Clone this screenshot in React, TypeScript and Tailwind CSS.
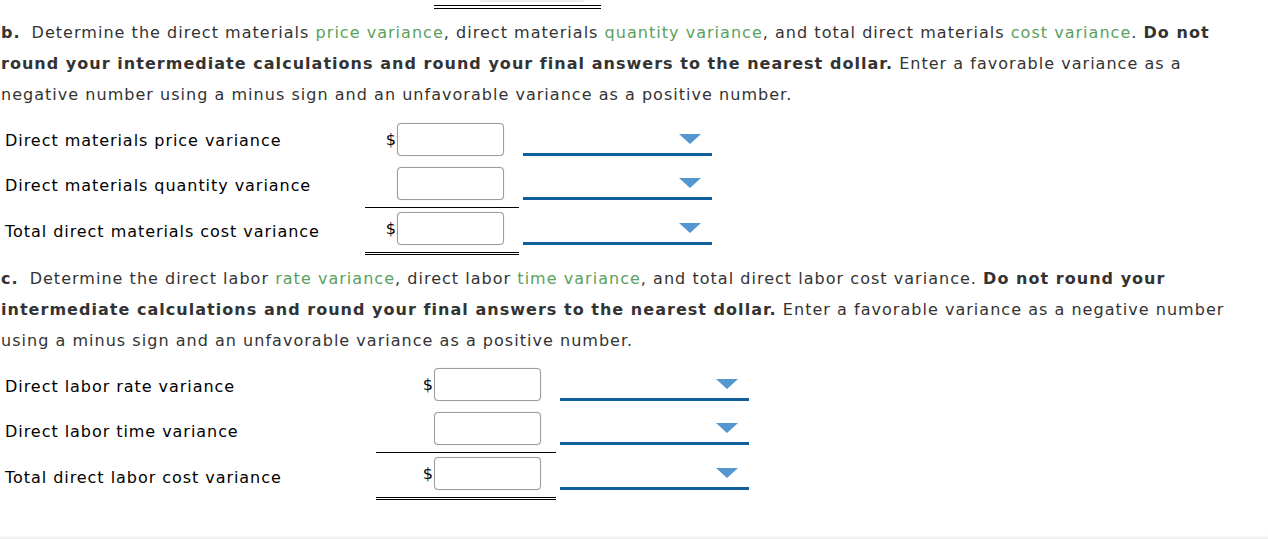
import type { ReactNode } from 'react';

const GREEN = 'text-[#5aa15d]';

interface Row {
  label: string;
  dollar: boolean;
  rule: 'none' | 'single' | 'double';
  labelPad: string;
  boxPad: string;
}

const MATERIAL_ROWS: Row[] = [
  { label: 'Direct materials price variance', dollar: true, rule: 'none', labelPad: 'pt-[21px]', boxPad: 'pt-[13px] pb-[6px]' },
  { label: 'Direct materials quantity variance', dollar: false, rule: 'single', labelPad: 'pt-[14px]', boxPad: 'pt-[5px] pb-[7px]' },
  { label: 'Total direct materials cost variance', dollar: true, rule: 'double', labelPad: 'pt-[14px]', boxPad: 'pt-[4px] pb-[7px]' },
];

const LABOR_ROWS: Row[] = [
  { label: 'Direct labor rate variance', dollar: true, rule: 'none', labelPad: 'pt-[21px]', boxPad: 'pt-[12px] pb-[6px]' },
  { label: 'Direct labor time variance', dollar: false, rule: 'single', labelPad: 'pt-[15px]', boxPad: 'pt-[5px] pb-[7px]' },
  { label: 'Total direct labor cost variance', dollar: true, rule: 'double', labelPad: 'pt-[15px]', boxPad: 'pt-[4px] pb-[7px]' },
];

function Caret() {
  return (
    <svg width="22" height="10" viewBox="0 0 22 10" className="absolute right-[11px] top-[11px]">
      <polygon points="0,0 22,0 11,10" fill="#5497d0" />
    </svg>
  );
}

function AnswerTable({ rows, labelWidth, amountWidth }: { rows: Row[]; labelWidth: string; amountWidth: string }) {
  return (
    <div className="flex flex-col">
      {rows.map((row) => {
        const ruleClass =
          row.rule === 'single'
            ? 'border-b border-black'
            : row.rule === 'double'
              ? 'border-b-[3px] border-double border-black'
              : '';
        return (
          <div key={row.label} className="flex items-start">
            <div
              className={`${labelWidth} shrink-0 pl-[5px] ${row.labelPad} text-[16px] leading-[20px] tracking-[0.95px] text-black whitespace-nowrap`}
            >
              {row.label}
            </div>
            <div className={`${amountWidth} shrink-0 flex justify-end items-center pr-[15px] ${row.boxPad} ${ruleClass}`}>
              {row.dollar ? <span className="text-[16px] leading-[20px] text-black mr-[1px]">$</span> : null}
              <div className="w-[107px] h-[33px] rounded-[4px] border border-[#9c9c9c] bg-white shadow-[0_0_1px_rgba(0,0,0,0.25)]" />
            </div>
            <div className={`ml-[4px] w-[189px] ${row.boxPad.split(' ')[0]}`}>
              <div className="relative h-[33px] border-b-[3px] border-[#105e9a]">
                <Caret />
              </div>
            </div>
          </div>
        );
      })}
    </div>
  );
}

function G({ children }: { children: ReactNode }) {
  return <span className={GREEN}>{children}</span>;
}

export default function App() {
  return (
    <div className="w-[1268px] h-[539px] bg-white flex flex-col overflow-hidden font-['DejaVu_Sans',Verdana,sans-serif]">
      <div className="flex">
        <div className="ml-[480px] w-[105px] h-[2px] bg-[#efefef] rounded-b-[3px]" />
      </div>
      <div className="ml-[434px] mt-[3px] w-[167px] h-[4px] border-y border-black" />

      <p className="mt-[8px] pl-[1px] text-[16px] leading-[31px] tracking-[1.03px] text-[#333] whitespace-nowrap">
        <b className="mr-[11px]">b.</b>Determine the direct materials <G>price variance</G>, direct materials{' '}
        <G>quantity variance</G>, and total direct materials <G>cost variance</G>. <b>Do not</b>
        <br />
        <b>round your intermediate calculations and round your final answers to the nearest dollar.</b> Enter a favorable
        variance as a
        <br />
        negative number using a minus sign and an unfavorable variance as a positive number.
      </p>

      <AnswerTable rows={MATERIAL_ROWS} labelWidth="w-[365px]" amountWidth="w-[154px]" />

      <p className="mt-[8px] pl-[1px] text-[16px] leading-[31px] tracking-[1.03px] text-[#333] whitespace-nowrap">
        <b className="mr-[11px]">c.</b>Determine the direct labor <G>rate variance</G>, direct labor <G>time variance</G>,
        and total direct labor cost variance. <b>Do not round your</b>
        <br />
        <b>intermediate calculations and round your final answers to the nearest dollar.</b> Enter a favorable variance
        as a negative number
        <br />
        using a minus sign and an unfavorable variance as a positive number.
      </p>

      <AnswerTable rows={LABOR_ROWS} labelWidth="w-[376px]" amountWidth="w-[180px]" />

      <div className="flex-1" />
      <div className="h-[4px] bg-gradient-to-b from-white to-[#ececec]" />
    </div>
  );
}
